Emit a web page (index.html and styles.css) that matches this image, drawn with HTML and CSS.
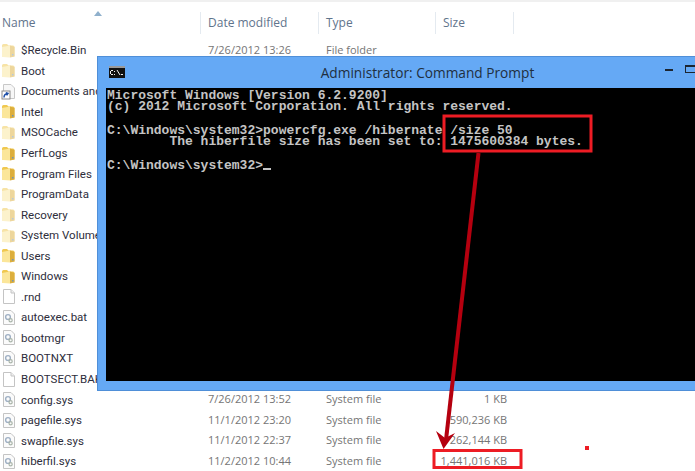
FILE: index.html
```html
<!DOCTYPE html>
<html lang="en">
<head>
<meta charset="utf-8">
<title>Administrator: Command Prompt</title>
<link rel="stylesheet" href="styles.css">
</head>
<body>
<svg class="defs" width="0" height="0" aria-hidden="true">
  <symbol id="folder" viewBox="0 0 15 17">
    <path d="M1 3.5 Q1 2 2.5 2 H6 L7.5 3.5 H12 Q13.5 3.5 13.5 5 V14.5 H1 Z" fill="#f0c850"/>
    <path d="M1 5 L9 3.5 V15.5 L2 15 Q1 15 1 14 Z" fill="#fbe69a"/>
    <path d="M9 3.5 L13.5 5 V14.5 L9 15.5 Z" fill="#dcae3c"/>
    <path d="M11 12 h1.5 v1.5 h-1.5 z" fill="#6f93b8"/>
  </symbol>
  <symbol id="file" viewBox="0 0 15 17">
    <path d="M2.5 1.5 H10 L13.5 5 V15.5 H2.5 Z" fill="#fff" stroke="#c4c4c4"/>
    <path d="M10 1.5 V5 H13.5" fill="#eee" stroke="#c4c4c4"/>
  </symbol>
  <symbol id="sys" viewBox="0 0 15 17">
    <path d="M2.5 1.5 H10 L13.5 5 V15.5 H2.5 Z" fill="#fbfbfb" stroke="#c4c4c4"/>
    <circle cx="7" cy="8" r="2.4" fill="none" stroke="#9fb0c4" stroke-width="1.4"/>
    <circle cx="9.6" cy="11.2" r="1.6" fill="none" stroke="#a9b4a9" stroke-width="1.2"/>
  </symbol>
  <symbol id="shortcut" viewBox="0 0 15 17">
    <path d="M2.5 1.5 H10 L13.5 5 V15.5 H2.5 Z" fill="#f7f7f7" stroke="#c8c8c8"/>
    <rect x="1" y="8" width="8" height="8" fill="#fff" stroke="#8a8a8a"/>
    <path d="M3 14.5 Q3 11 6.5 10.5 M4.8 9.6 L7 10.4 L5.6 12.4" fill="none" stroke="#1d4fa8" stroke-width="1.5"/>
  </symbol>
</svg>

<main class="explorer">
  <header class="columns">
    <div class="col col-name">Name<svg class="sort" width="8" height="5" viewBox="0 0 8 5"><path d="M0 5 L4 0 L8 5 Z" fill="#8fb0cc"/></svg></div>
    <div class="col col-date">Date modified</div>
    <div class="col col-type">Type</div>
    <div class="col col-size">Size</div>
  </header>
  <section class="rows">
    <div class="row"><span class="name"><svg class="ico faded"><use href="#folder"/></svg>$Recycle.Bin</span><span class="date">7/26/2012 13:26</span><span class="type">File folder</span><span class="size"></span></div>
    <div class="row"><span class="name"><svg class="ico faded"><use href="#folder"/></svg>Boot</span></div>
    <div class="row"><span class="name"><svg class="ico"><use href="#shortcut"/></svg>Documents and Settings</span></div>
    <div class="row"><span class="name"><svg class="ico"><use href="#folder"/></svg>Intel</span></div>
    <div class="row"><span class="name"><svg class="ico faded"><use href="#folder"/></svg>MSOCache</span></div>
    <div class="row"><span class="name"><svg class="ico"><use href="#folder"/></svg>PerfLogs</span></div>
    <div class="row"><span class="name"><svg class="ico"><use href="#folder"/></svg>Program Files</span></div>
    <div class="row"><span class="name"><svg class="ico faded"><use href="#folder"/></svg>ProgramData</span></div>
    <div class="row"><span class="name"><svg class="ico faded"><use href="#folder"/></svg>Recovery</span></div>
    <div class="row"><span class="name"><svg class="ico faded"><use href="#folder"/></svg>System Volume Information</span></div>
    <div class="row"><span class="name"><svg class="ico"><use href="#folder"/></svg>Users</span></div>
    <div class="row"><span class="name"><svg class="ico"><use href="#folder"/></svg>Windows</span></div>
    <div class="row"><span class="name"><svg class="ico"><use href="#file"/></svg>.rnd</span></div>
    <div class="row"><span class="name"><svg class="ico"><use href="#sys"/></svg>autoexec.bat</span></div>
    <div class="row"><span class="name"><svg class="ico"><use href="#sys"/></svg>bootmgr</span></div>
    <div class="row"><span class="name"><svg class="ico"><use href="#sys"/></svg>BOOTNXT</span></div>
    <div class="row"><span class="name"><svg class="ico"><use href="#file"/></svg>BOOTSECT.BAK</span></div>
    <div class="row"><span class="name"><svg class="ico"><use href="#sys"/></svg>config.sys</span><span class="date">7/26/2012 13:52</span><span class="type">System file</span><span class="size">1 KB</span></div>
    <div class="row"><span class="name"><svg class="ico"><use href="#sys"/></svg>pagefile.sys</span><span class="date">11/1/2012 23:20</span><span class="type">System file</span><span class="size">590,236 KB</span></div>
    <div class="row"><span class="name"><svg class="ico"><use href="#sys"/></svg>swapfile.sys</span><span class="date">11/1/2012 22:37</span><span class="type">System file</span><span class="size">262,144 KB</span></div>
    <div class="row"><span class="name"><svg class="ico"><use href="#sys"/></svg>hiberfil.sys</span><span class="date">11/2/2012 10:44</span><span class="type">System file</span><span class="size">1,441,016 KB</span></div>
  </section>
</main>

<section class="cmd">
  <div class="cmd-title">
    <svg class="cmd-icon" width="16" height="12" viewBox="0 0 16 12"><rect width="16" height="12" fill="#111"/><rect y="0" width="16" height="2" fill="#9a9a9a"/><path d="M2 4 h2 v1 h-2 z M2 8 h2 v1 h-2 z M1 5 h1 v3 h-1 z M5 5 h1 v1 h-1 z M5 8 h1 v1 h-1 z M12 8 h2 v1 h-2 z" fill="#eee"/><path d="M8 4 L11 9" stroke="#eee" stroke-width="1"/></svg>
    <span class="cmd-caption">Administrator: Command Prompt</span>
    <span class="cmd-min"></span>
    <span class="cmd-max"></span>
  </div>
  <pre class="cmd-body">Microsoft Windows [Version 6.2.9200]
(c) 2012 Microsoft Corporation. All rights reserved.

C:\Windows\system32&gt;powercfg.exe /hibernate /size 50
        The hiberfile size has been set to: 1475600384 bytes.

C:\Windows\system32&gt;<span class="cursor"></span></pre>
</section>

<svg class="marks" width="695" height="471" viewBox="0 0 695 471" aria-hidden="true">
  <rect x="444" y="116" width="147" height="35" fill="none" stroke="#ed1c24" stroke-width="3"/>
  <rect x="434" y="450.500" width="87" height="17" fill="none" stroke="#ed1c24" stroke-width="3"/>
  <path d="M478.500 153 L446 440" stroke="#b5000f" stroke-width="4" fill="none"/>
  <path d="M436 431 L443.500 449 L455 433 L445 438 Z" fill="#b5000f"/>
  <rect x="585" y="446" width="4" height="4" fill="#ed1c24"/>
</svg>
</body>
</html>
```

FILE: styles.css
```css
* { box-sizing: border-box; }

html, body {
  margin: 0;
  width: 695px;
  height: 471px;
  overflow: hidden;
  background: #fff;
}

body {
  position: relative;
  font-family: "Open Sans", "Noto Sans", sans-serif;
  font-size: 12px;
}

.defs { position: absolute; }

.explorer {
  height: 471px;
  overflow: hidden;
}

.columns {
  display: grid;
  grid-template-columns: 201px 118px 117px 78px;
  height: 40px;
  padding-top: 10px;
  border-top: 2px solid #f0f0f0;
  color: #5f748c;
}

.col {
  position: relative;
  height: 22px;
  line-height: 22px;
  padding-left: 7px;
  border-right: 1px solid #e4eaf0;
}

.col-name { padding-left: 2px; }

.sort {
  position: absolute;
  left: 94px;
  top: -1px;
}

.row {
  display: grid;
  grid-template-columns: 208px 118px 110px 71px;
  height: 20.55px;
  line-height: 20px;
  white-space: nowrap;
  font-size: 11px;
}

.name {
  display: flex;
  align-items: center;
  width: 97px;
  color: #2e2e3c;
  overflow: hidden;
  font-family: Roboto, "Open Sans", sans-serif;
  font-size: 11.500px;
}

.ico {
  width: 15px;
  height: 17px;
  margin: 0 5px 0 1px;
  flex: none;
}

.faded { opacity: 0.5; }

.date, .type, .size { color: #757575; }
.size { text-align: right; }

.cmd {
  position: absolute;
  left: 97px;
  top: 56px;
  width: 598px;
  height: 335px;
  display: flex;
  flex-direction: column;
  padding: 0 0 9px 8px;
  background: #65a9f5;
  border-left: 1px solid #4f8fd8;
  border-top: 1px solid #4f8fd8;
  border-bottom: 1px solid #4f8fd8;
}

.cmd-title {
  position: relative;
  height: 31px;
  flex: none;
  display: flex;
  align-items: center;
  justify-content: center;
}

.cmd-icon {
  position: absolute;
  left: 3px;
  top: 9px;
}

.cmd-caption {
  font-size: 13.700px;
  color: #1f2f3f;
  margin-left: 54px;
}

.cmd-min {
  position: absolute;
  left: 559px;
  top: 12px;
  width: 8px;
  height: 2px;
  background: #1c2530;
}

.cmd-max {
  position: absolute;
  left: 579px;
  top: 8px;
  width: 12px;
  height: 8px;
  border: 1px solid #1c2530;
  border-top-width: 2px;
}

.cmd-body {
  flex: 1;
  margin: 0;
  padding: 1.500px 0 0 1px;
  background: #000;
  color: #c4c4c4;
  font-family: "Liberation Mono", "DejaVu Sans Mono", monospace;
  font-weight: 700;
  font-size: 13px;
  line-height: 11.700px;
}

.cursor {
  display: inline-block;
  width: 8px;
  height: 2px;
  background: #c4c4c4;
  vertical-align: -1px;
}

.marks {
  position: absolute;
  left: 0;
  top: 0;
}
```
